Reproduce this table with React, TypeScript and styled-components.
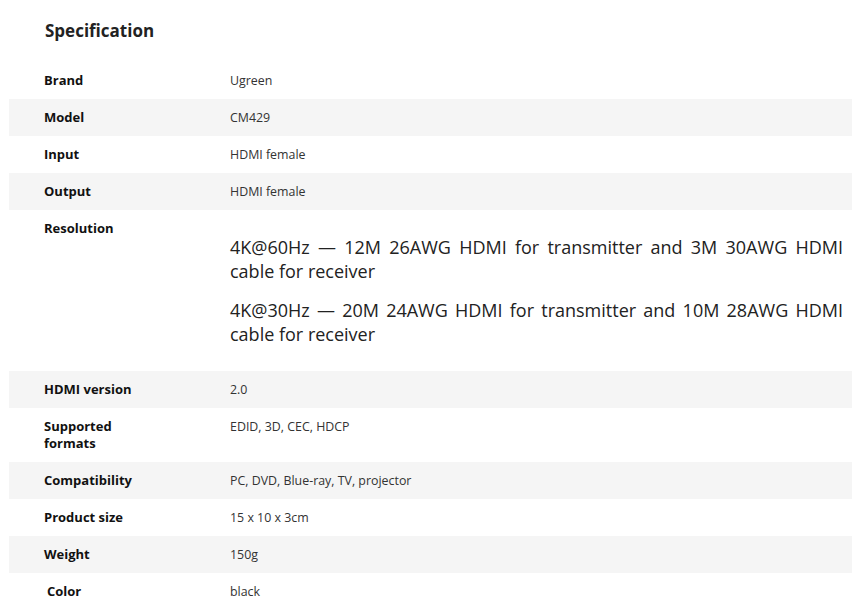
import React from "react";
import styled, { createGlobalStyle } from "styled-components";

const Global = createGlobalStyle`
  html, body { margin: 0; padding: 0; background: #fff; }
  body { font-family: "Open Sans", "Liberation Sans", sans-serif; color: #333; }
`;

const Page = styled.div`
  padding: 0 0 0 9px;
  width: 843px;
`;

const Title = styled.h2`
  margin: 0;
  padding: 19px 0 20px 36px;
  font-size: 17px;
  line-height: 23px;
  font-weight: 700;
  color: #222;
`;

const Table = styled.div`
  display: flex;
  flex-direction: column;
`;

const Row = styled.div<{ $shaded: boolean }>`
  display: grid;
  grid-template-columns: 221px 1fr;
  background: ${(p) => (p.$shaded ? "#f5f5f5" : "#fff")};
`;

const Label = styled.div<{ $indent?: boolean }>`
  padding: 10px 0 10px ${(p) => (p.$indent ? "38px" : "35px")};
  font-size: 13px;
  line-height: 17px;
  font-weight: 700;
  color: #111;
  max-width: 100px;
`;

const Value = styled.div`
  padding: 10px 9px 10px 0;
  font-size: 12.4px;
  line-height: 17px;
  color: #333;
`;

const Para = styled.p`
  margin: 15px 0;
  font-size: 18px;
  line-height: 24px;
  text-align: justify;
  color: #222;
`;

const rows: { label: string; value: React.ReactNode; indent?: boolean }[] = [
  { label: "Brand", value: "Ugreen" },
  { label: "Model", value: "CM429" },
  { label: "Input", value: "HDMI female" },
  { label: "Output", value: "HDMI female" },
  {
    label: "Resolution",
    value: (
      <>
        <Para>4K@60Hz — 12M 26AWG HDMI for transmitter and 3M 30AWG HDMI cable for receiver</Para>
        <Para>4K@30Hz — 20M 24AWG HDMI for transmitter and 10M 28AWG HDMI cable for receiver</Para>
      </>
    ),
  },
  { label: "HDMI version", value: "2.0" },
  { label: "Supported formats", value: "EDID, 3D, CEC, HDCP" },
  { label: "Compatibility", value: "PC, DVD, Blue-ray, TV, projector" },
  { label: "Product size", value: "15 x 10 x 3cm" },
  { label: "Weight", value: "150g" },
  { label: "Color", value: "black", indent: true },
];

export default function App() {
  return (
    <Page>
      <Global />
      <Title>Specification</Title>
      <Table>
        {rows.map((r, i) => (
          <Row key={r.label} $shaded={i % 2 === 1}>
            <Label $indent={r.indent}>{r.label}</Label>
            <Value>{r.value}</Value>
          </Row>
        ))}
      </Table>
    </Page>
  );
}
